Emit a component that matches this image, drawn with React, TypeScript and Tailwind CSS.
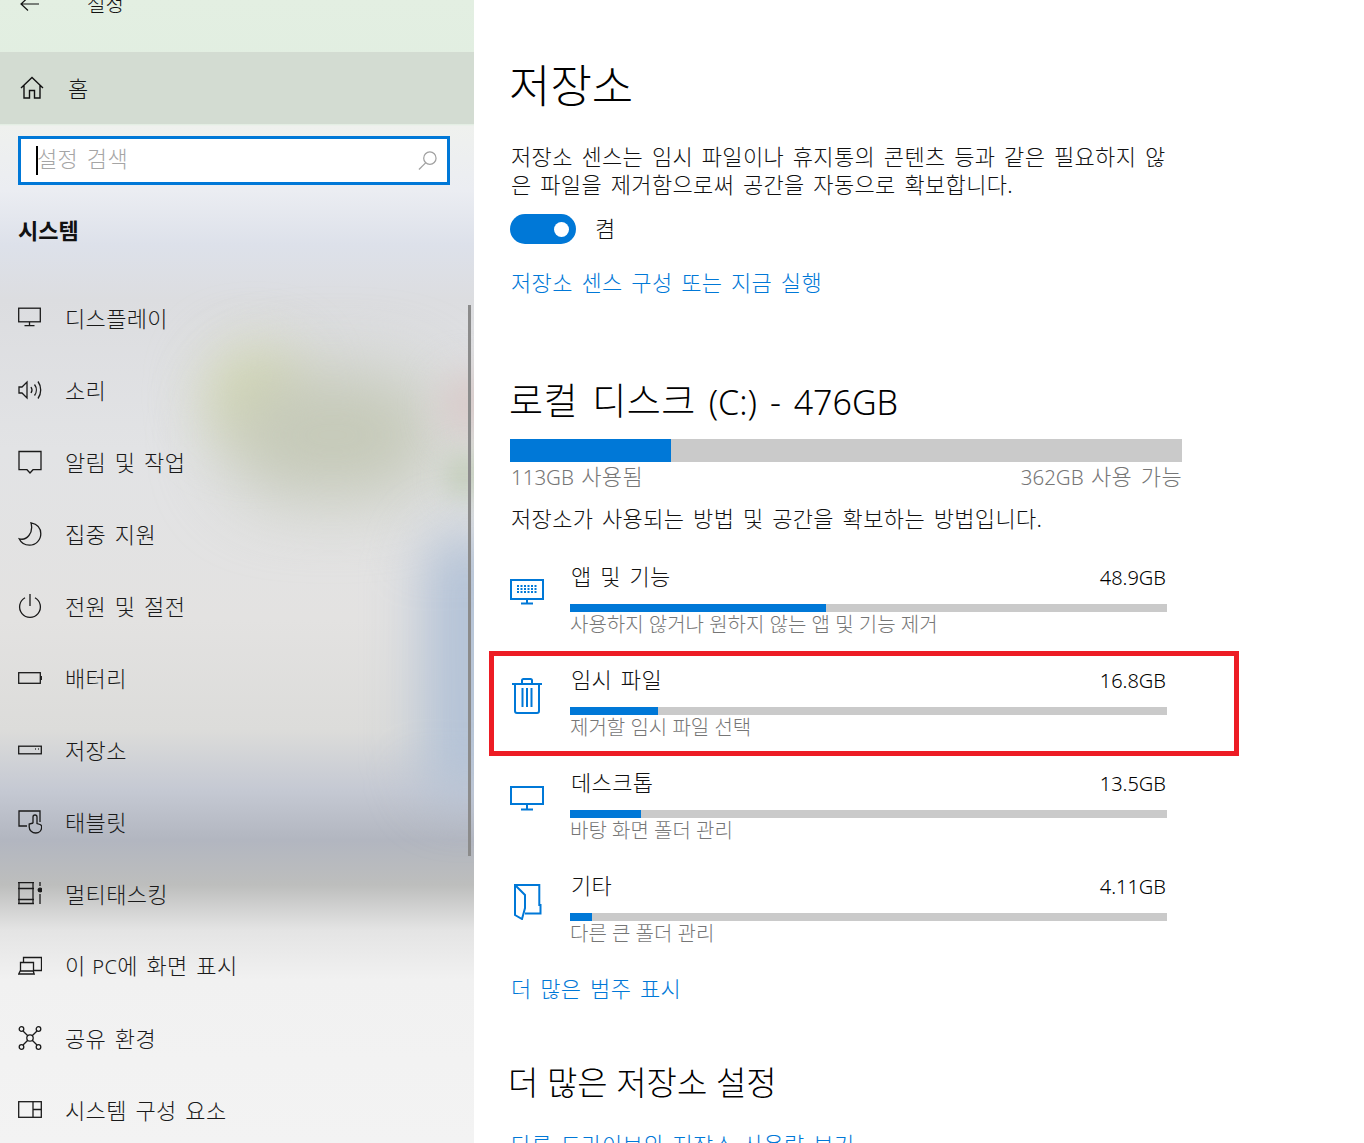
import type { ReactNode } from "react";

const FONT = "font-['Noto_Sans','Noto_Sans_CJK_KR',sans-serif]";
// hangul in the reference runs wider than Noto, so track it a little
const BODY = "text-[22px] font-light leading-[28px] tracking-[0.35px] [word-spacing:2.6px]";

function Icon({ children, className = "" }: { children: ReactNode; className?: string }) {
  return (
    <svg viewBox="0 0 24 24" fill="none" stroke="currentColor" strokeWidth="1.3" className={className}>
      {children}
    </svg>
  );
}

const navItems: { label: ReactNode; key: string; icon: ReactNode }[] = [
  { key: "display", label: "디스플레이", icon: <><rect x="0.7" y="2.2" width="21.6" height="13.6" /><path d="M11.5 16v3.2M6.5 19.6h10" /></> },
  { key: "sound", label: "소리", icon: <><path d="M1 9h3l5-5v16l-5-5H1z" /><path d="M13 9c1.2 1.8 1.2 4.2 0 6M16.5 6.5c2.4 3.2 2.4 7.8 0 11M20 3.5c3.6 5 3.6 12 0 17" /></> },
  { key: "notify", label: "알림 및 작업", icon: <path d="M1 1.5h22v18.2h-8L12 23l-3-3.3H1z" /> },
  { key: "focus", label: "집중 지원", icon: <path d="M13 0.8c6 1.2 9.8 5.3 9.8 11 0 6.3-5 11.4-11.3 11.4-4.5 0-8.5-2.4-10.3-6.4 7.4 2.2 14.6-5.6 11.8-16z" /> },
  { key: "power", label: "전원 및 절전", icon: <><path d="M7 3.8A10.4 10.4 0 1 0 17 3.8" /><path d="M12 0v12" /></> },
  { key: "battery", label: "배터리", icon: <><rect x="0.7" y="6.7" width="21.6" height="10.6" /><path d="M23.3 10v4" /></> },
  { key: "storage", label: "저장소", icon: <><rect x="0.7" y="8.2" width="22.6" height="7.6" /><path d="M17 11h.8M20 11h.8" strokeWidth="1.6" /></> },
  { key: "tablet", label: "태블릿", icon: <><path d="M9 16H1V1h21v11" /><path d="M15 13V7a2 2 0 0 1 4 0v6.500l3 1a2.500 2.500 0 0 1 1.700 2.500c0 3.500-2.500 6-6 6s-6.500-2.500-6.500-6v-3l4-1" /></> },
  { key: "multi", label: "멀티태스킹", icon: <><path d="M0 0.500h16M0 6.500h16M0 17.500h16M0 21.500h16M1 0.500v21M15 0.500v21" /><path d="M22 0v4M22 12v10" /><circle cx="22" cy="8" r="1.800" fill="currentColor" /></> },
  { key: "project", label: <>이 <span className="-ml-[2px] text-[20px] font-light">PC</span>에 화면 표시</>, icon: <><path d="M5.500 8V3.500h18v13h-8" /><path d="M2.500 8.500h13V17h-13zM0.700 20h15.500l-1-3h-13z" /></> },
  { key: "share", label: "공유 환경", icon: <><circle cx="12" cy="12" r="3.200" /><circle cx="3.500" cy="3" r="2.300" /><circle cx="20.500" cy="3" r="2.300" /><circle cx="3.500" cy="21" r="2.300" /><circle cx="20.500" cy="21" r="2.300" /><path d="M5 5l4.800 4.800M19 5l-4.800 4.800M5 19l4.800-4.800M19 19l-4.800-4.800" /></> },
  { key: "parts", label: "시스템 구성 요소", icon: <><rect x="0.700" y="3.700" width="22.600" height="15.600" /><path d="M15 3.700v15.600M15 11.500h8.300" /></> },
];

const usage: { name: string; size: string; sub: string; barWidth: number; icon: ReactNode }[] = [
  {
    name: "앱 및 기능",
    size: "48.9GB",
    sub: "사용하지 않거나 원하지 않는 앱 및 기능 제거",
    barWidth: 256,
    icon: (
      <>
        <rect x="1" y="5" width="32" height="19" />
        <path d="M17 24v4M11 28.500h12" />
        <path d="M7 11h20M7 14h20M7 17h20" strokeDasharray="2 1.500" strokeWidth="1.800" />
      </>
    ),
  },
  {
    name: "임시 파일",
    size: "16.8GB",
    sub: "제거할 임시 파일 선택",
    barWidth: 88,
    icon: (
      <>
        <path d="M2 6h30M5 6v27a2 2 0 0 0 2 2h20a2 2 0 0 0 2-2V6M12 6V2.500a1.500 1.500 0 0 1 1.500-1.500h7a1.500 1.500 0 0 1 1.500 1.500V6" />
        <path d="M12.500 10v19M17 10v19M21.500 10v19" strokeWidth="2" />
      </>
    ),
  },
  {
    name: "데스크톱",
    size: "13.5GB",
    sub: "바탕 화면 폴더 관리",
    barWidth: 71,
    icon: (
      <>
        <rect x="1" y="6" width="32" height="17" />
        <path d="M17 23v5M11 28.500h12" />
      </>
    ),
  },
  {
    name: "기타",
    size: "4.11GB",
    sub: "다른 큰 폴더 관리",
    barWidth: 22,
    icon: <path d="M15 29.500h15.500V21h-1.200V1H5v30l7 4 3-11V11L5 1" />,
  },
];

function Sidebar() {
  return (
    <aside className="relative h-full w-[474px] shrink-0 overflow-hidden bg-[linear-gradient(180deg,#e3efe2_0px,#e0ede0_124px,#eff1ee_126px,#ebedf2_190px,#dde1ea_245px,#dcdde0_300px,#e2e3e5_450px,#e3e2e1_620px,#dcdcda_730px,#c5c9d3_790px,#b2b6c0_840px,#bdbebd_885px,#e4e4e4_930px,#f1f1f1_980px,#f3f3f3_1143px)]">
      {/* wallpaper showing through the acrylic */}
      <div className="absolute left-[205px] top-[345px] h-[100px] w-[100px] rounded-full bg-[#d4d9b4] blur-[28px]" />
      <div className="absolute left-[225px] top-[370px] h-[130px] w-[215px] rounded-full bg-[#c5c9b8] blur-[35px]" />
      <div className="absolute left-[440px] top-[370px] h-[70px] w-[60px] rounded-full bg-[#d8cbca] blur-[18px]" />
      <div className="absolute left-[445px] top-[450px] h-[50px] w-[40px] rounded-full bg-[#c4cebb] blur-[14px]" />
      <div className="absolute left-[425px] top-[530px] h-[270px] w-[80px] rounded-full bg-[#b0c0d6] blur-[28px]" />

      <div className="relative">
        <div className="flex h-[52px] flex-col pl-5">
          <div className="-mt-[9px] flex items-center text-[#111]">
            <svg viewBox="0 0 20 16" className="h-[16px] w-[20px]" fill="none" stroke="currentColor" strokeWidth="1.200">
              <path d="M19 7H1M8 0.500 1 7l7 6.500" />
            </svg>
            <span className="ml-[47px] text-[20px] font-light leading-[28px]">설정</span>
          </div>
        </div>

        <div className="flex h-[72px] items-center bg-[#d3dcd2] pl-5 text-[#111]">
          <svg viewBox="0 0 24 24" className="h-[24px] w-[24px]" fill="none" stroke="currentColor" strokeWidth="1.400">
            <path d="M1 12 12 1.500 23 12M4 9.500V22h5.500v-7.500h5V22H20V9.500" />
          </svg>
          <span className="ml-[24px] text-[22px] font-light leading-[28px]">홈</span>
        </div>

        <div className="mx-[18px] mt-3 flex h-[49px] w-[432px] items-center border-[3px] border-[#0078d7] bg-white pl-[15px] pr-[10px]">
          <span className="h-[29px] w-[2px] bg-black" />
          <span className={`${BODY} -ml-[1px] flex-1 pb-[5px] text-[#a5a5a5]`}>설정 검색</span>
          <svg viewBox="0 0 20 20" className="h-[19px] w-[19px] text-[#a0a0a0]" fill="none" stroke="currentColor" strokeWidth="1.300">
            <circle cx="12.500" cy="7.500" r="6.500" />
            <path d="M8 12.500 1 19.500" />
          </svg>
        </div>

        <h2 className="ml-[18px] mt-[31px] text-[22px] font-bold leading-[28px] text-[#111]">시스템</h2>

        <nav className="mt-[38px]">
          {navItems.map((item) => (
            <div key={item.key} className="flex h-[72px] items-center pl-[18px] text-[#1a1a1a]">
              <Icon className="h-[24px] w-[24px] shrink-0">{item.icon}</Icon>
              <span className={`${BODY} ml-[23px]`}>{item.label}</span>
            </div>
          ))}
        </nav>
      </div>

      <div className="absolute left-[468px] top-[305px] h-[551px] w-[3px] bg-[#8b8b8b]" />
    </aside>
  );
}

function UsageRow({ name, size, sub, barWidth, icon, highlighted }: (typeof usage)[number] & { highlighted?: boolean }) {
  return (
    <div className="relative flex pb-[30px]">
      {highlighted && <div className="absolute -top-[15px] left-[-21px] h-[105px] w-[750px] border-[5px] border-[#ed1c24]" />}
      <div className="w-[60px] shrink-0 pt-[12px] text-[#0078d7]">
        <svg viewBox="0 0 34 36" className="h-[36px] w-[34px]" fill="none" stroke="currentColor" strokeWidth="2">
          {icon}
        </svg>
      </div>
      <div className="w-[597px]">
        <div className="flex justify-between pr-[1px] text-[#111]">
          <span className={`${BODY} ml-[1px] -translate-y-[1px]`}>{name}</span>
          <span className="translate-y-[1px] text-[20px] font-light leading-[28px] text-black">{size}</span>
        </div>
        <div className="mt-[13px] h-[8px] bg-[#cacaca]">
          <div className="h-full bg-[#0078d7]" style={{ width: barWidth }} />
        </div>
        <div className="h-[24px] translate-y-[1px] text-[20px] font-light leading-[24px] text-[#767676]">{sub}</div>
      </div>
    </div>
  );
}

export default function App() {
  return (
    <div className={`${FONT} flex h-[1143px] w-[1364px] overflow-hidden bg-white`}>
      <Sidebar />
      <main className="pl-[36px] pt-[57px] text-[#111]">
        <h1 className="-ml-[1px] mt-[1px] h-[56px] text-[45px] font-light leading-[56px] text-black">저장소</h1>
        <p className={`${BODY} ml-[1px] mt-[28px] whitespace-nowrap`}>
          저장소 센스는 임시 파일이나 휴지통의 콘텐츠 등과 같은 필요하지 않<br />은 파일을 제거함으로써 공간을 자동으로 확보합니다.
        </p>
        <div className="mt-[16px] flex items-center">
          <div className="flex h-[30px] w-[66px] items-center justify-end rounded-full bg-[#0078d7] pr-[7px]">
            <div className="h-[15px] w-[15px] rounded-full bg-white" />
          </div>
          <span className={`${BODY} ml-[19px] -translate-y-[1px]`}>켬</span>
        </div>
        <a className={`${BODY} ml-[1px] mt-[24px] block text-[#0078d7]`}>저장소 센스 구성 또는 지금 실행</a>

        <h2 className="-ml-[1px] mt-[83px] h-[44px] whitespace-nowrap text-[34px] font-light leading-[44px] text-black [word-spacing:4px]">
          <span className="text-[37px] tracking-[0.5px]">로컬 디스크</span> (C:) - 476GB
        </h2>
        <div className="mt-[16px] h-[23px] w-[672px] bg-[#cacaca]">
          <div className="h-full w-[161px] bg-[#0078d7]" />
        </div>
        <div className="flex h-[28px] w-[672px] justify-between text-[20.5px] font-light leading-[28px] text-[#767676] [word-spacing:2px]">
          <span className="ml-[1px]">113GB <span className={BODY}>사용됨</span></span>
          <span>362GB <span className={BODY}>사용 가능</span></span>
        </div>
        <p className={`${BODY} ml-[1px] mt-[14px] whitespace-nowrap`}>저장소가 사용되는 방법 및 공간을 확보하는 방법입니다.</p>

        <div className="mt-[31px]">
          {usage.map((row, i) => (
            <UsageRow key={row.name} {...row} highlighted={i === 1} />
          ))}
        </div>

        <a className={`${BODY} ml-[1px] -mt-[1px] block text-[#0078d7]`}>더 많은 범주 표시</a>
        <h2 className="mt-[59px] -ml-[2px] text-[33px] font-light leading-[44px] text-black">더 많은 저장소 설정</h2>
        <a className={`${BODY} ml-[1px] mt-[25px] block text-[#0078d7]`}>다른 드라이브의 저장소 사용량 보기</a>
      </main>
    </div>
  );
}
